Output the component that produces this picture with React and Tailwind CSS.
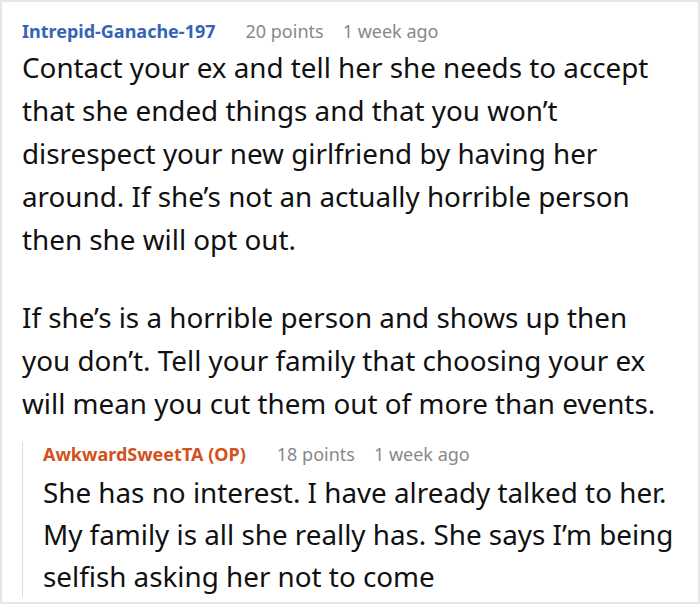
export default function App() {
  return (
    <div className="w-[700px] h-[604px] bg-white border-2 border-[#e6e6e6] overflow-hidden" style={{ fontFamily: '"Noto Sans", sans-serif' }}>
      <div className="pl-[20px] pr-[20px] pt-[17px]">
        <div className="flex items-baseline text-[18px] leading-[24px]">
          <span className="font-bold text-[#3465b4]">Intrepid-Ganache-197</span>
          <span className="ml-[30px] text-[#888888]">20 points</span>
          <span className="ml-[19px] text-[#888888]">1 week ago</span>
        </div>
        <div className="mt-[3px] text-[27.8px] leading-[43px] text-[#111111]">
          <p>Contact your ex and tell her she needs to accept that she ended things and that you won’t disrespect your new girlfriend by having her around. If she’s not an actually horrible person then she will opt out.</p>
          <p className="mt-[35px]">If she’s is a horrible person and shows up then you don’t. Tell your family that choosing your ex will mean you cut them out of more than events.</p>
        </div>
        <div className="mt-[17px] border-l border-[#dddddd] pl-[20px]">
          <div className="flex items-baseline text-[18px] leading-[24px]">
            <span className="font-bold text-[#d4501c]">AwkwardSweetTA (OP)</span>
            <span className="ml-[31px] text-[#888888]">18 points</span>
            <span className="ml-[19px] text-[#888888]">1 week ago</span>
          </div>
          <div className="mt-[5px] text-[27.8px] leading-[42px] text-[#111111]">
            <p>She has no interest. I have already talked to her. My family is all she really has. She says I’m being selfish asking her not to come</p>
          </div>
        </div>
      </div>
    </div>
  );
}
